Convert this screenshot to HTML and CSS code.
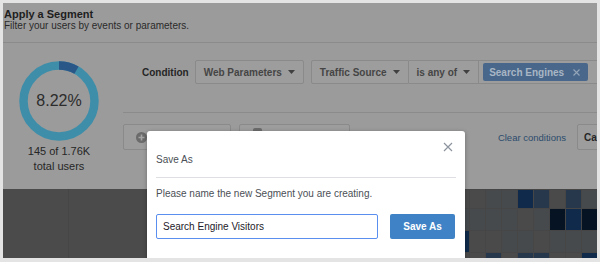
FILE: index.html
```html
<!DOCTYPE html>
<html lang="en">
<head>
<meta charset="utf-8">
<title>Apply a Segment</title>
<link rel="stylesheet" href="styles.css">
</head>
<body>
<div class="frame">
  <header class="head">
    <h1 class="title">Apply a Segment</h1>
    <p class="sub">Filter your users by events or parameters.</p>
  </header>
  <section class="main">
    <div class="stats">
      <div class="donut">
        <svg class="ring" viewBox="0 0 80 80" width="80" height="80">
          <circle cx="40" cy="40" r="35.5" fill="none" stroke="#3f8ea9" stroke-width="8.5"/>
          <circle cx="40" cy="40" r="35.5" fill="none" stroke="#295787" stroke-width="8.5" stroke-dasharray="18.3 300" transform="rotate(-90 40 40)"/>
        </svg>
        <span class="pct">8.22%</span>
      </div>
      <p class="count">145 of 1.76K<br>total users</p>
    </div>
    <div class="builder">
      <div class="cond">
        <span class="cond-label">Condition</span>
        <div class="dd single">Web Parameters <svg class="caret" width="7" height="4" viewBox="0 0 7 4"><path d="M0 0h7L3.5 4z"/></svg></div>
        <div class="group">
          <div class="dd first">Traffic Source <svg class="caret" width="7" height="4" viewBox="0 0 7 4"><path d="M0 0h7L3.5 4z"/></svg></div>
          <div class="dd mid">is any of <svg class="caret" width="7" height="4" viewBox="0 0 7 4"><path d="M0 0h7L3.5 4z"/></svg></div>
          <div class="tags">
            <span class="tag">Search Engines <svg class="tag-x" width="7" height="7" viewBox="0 0 7 7"><path d="M0.5 0.5l6 6M6.5 0.5l-6 6"/></svg></span>
          </div>
        </div>
      </div>
      <div class="actions">
        <div class="btn add">
          <svg width="11" height="11" viewBox="0 0 11 11"><circle cx="5.5" cy="5.5" r="5.5" fill="#6b6b6b"/><path d="M5.5 2.5v6M2.5 5.5h6" stroke="#a4a4a4" stroke-width="1.6"/></svg>
        </div>
        <div class="btn add2">
          <svg width="9" height="9" viewBox="0 0 9 9"><rect x="0" y="0" width="9" height="9" rx="2" fill="#6b6b6b"/></svg>
        </div>
        <span class="clear">Clear conditions</span>
        <div class="btn cancel">Cancel</div>
      </div>
    </div>
  </section>
  <section class="heat">
    <div class="heat-left"></div>
    <div class="grid">
      <i class="g"></i><i class="g"></i><i class="s"></i><i class="s"></i><i class="n"></i><i class="l"></i><i class="g"></i><i class="l"></i><i class="s"></i>
      <i class="s"></i><i class="s"></i><i class="s"></i><i class="s"></i><i class="g"></i><i class="s"></i><i class="d"></i><i class="n"></i><i class="d"></i>
      <i class="n"></i><i class="g"></i><i class="g"></i><i class="s"></i><i class="s"></i><i class="g"></i><i class="s"></i><i class="s"></i><i class="s"></i>
      <i class="g"></i><i class="g"></i><i class="l"></i><i class="g"></i><i class="l"></i><i class="l"></i><i class="g"></i><i class="g"></i><i class="n"></i>
    </div>
  </section>
  <div class="modal">
    <div class="m-head">Save As</div>
    <svg class="m-close" width="10" height="10" viewBox="0 0 10 10"><path d="M1 1l8 8M9 1l-8 8"/></svg>
    <div class="m-body">
      <p class="m-text">Please name the new Segment you are creating.</p>
      <div class="m-row">
        <input class="m-input" type="text" value="Search Engine Visitors">
        <button class="m-save" type="button">Save As</button>
      </div>
    </div>
  </div>
</div>
</body>
</html>
```
FILE: styles.css
```css
body {
  margin: 0;
  background: #e4e4e4;
  font-family: "Liberation Sans", Arial, sans-serif;
}

.frame {
  position: relative;
  margin: 3px;
  width: 594px;
  height: 255px;
  overflow: hidden;
  background: #9b9b9b;
}

.head {
  height: 40px;
  box-sizing: border-box;
  padding: 5px 1px 0;
  border-bottom: 1px solid #8b8b8b;
}

.title {
  margin: 0;
  font-size: 11px;
  line-height: 12px;
  font-weight: bold;
  color: #1e1e1e;
}

.sub {
  margin: 0;
  font-size: 10px;
  line-height: 12px;
  color: #2a2a2a;
}

.main {
  display: grid;
  grid-template-columns: 112px 1fr;
  height: 146px;
}

.stats {
  display: flex;
  flex-direction: column;
  align-items: center;
  padding-top: 18px;
}

.donut {
  display: grid;
  place-items: center;
  width: 80px;
  height: 80px;
}

.donut > * {
  grid-area: 1 / 1;
}

.pct {
  font-size: 16px;
  color: #2c2c2c;
}

.count {
  margin: 3px 0 0;
  font-size: 11px;
  line-height: 15px;
  text-align: center;
  color: #262626;
}

.builder {
  padding-left: 8px;
  min-width: 0;
}

.cond {
  display: flex;
  align-items: center;
  padding: 17px 0 28px 19px;
  border-bottom: 1px solid #8b8b8b;
}

.cond-label {
  font-size: 10px;
  font-weight: bold;
  color: #262626;
  margin-right: 6px;
}

.dd {
  display: flex;
  align-items: center;
  gap: 6px;
  height: 24px;
  box-sizing: border-box;
  padding: 0 8px;
  border: 1px solid #8a8a8a;
  background: #9d9d9d;
  font-size: 10px;
  font-weight: bold;
  color: #454545;
  border-radius: 2px;
  white-space: nowrap;
}

.caret {
  fill: #404040;
}

.group {
  display: flex;
  flex: 1;
  margin-left: 7px;
  min-width: 0;
}

.dd.first {
  border-radius: 2px 0 0 2px;
}

.dd.mid {
  border-left: none;
  border-radius: 0;
}

.tags {
  flex: 1;
  display: flex;
  align-items: center;
  height: 24px;
  box-sizing: border-box;
  border: 1px solid #8a8a8a;
  border-left: none;
  border-right: none;
  background: #9d9d9d;
}

.tag {
  display: flex;
  align-items: center;
  gap: 9px;
  height: 18px;
  margin-left: 4px;
  padding: 0 8px 0 6px;
  background: #48678a;
  color: #a9b6c5;
  font-size: 10px;
  font-weight: bold;
  border-radius: 2px;
  white-space: nowrap;
}

.tag-x {
  stroke: #95a6b9;
  stroke-width: 1.1;
}

.actions {
  display: flex;
  align-items: center;
  gap: 8px;
  margin-top: 11px;
  height: 26px;
}

.btn {
  display: flex;
  align-items: center;
  flex-shrink: 0;
  height: 26px;
  box-sizing: border-box;
  border: 1px solid #8a8a8a;
  background: #9d9d9d;
  border-radius: 2px;
}

.add {
  width: 108px;
  padding-left: 12px;
}

.add2 {
  width: 111px;
  padding-left: 13px;
  align-items: flex-start;
  padding-top: 3px;
}

.clear {
  margin-left: auto;
  font-size: 9.5px;
  color: #2b4b6d;
  white-space: nowrap;
}

.cancel {
  width: 60px;
  margin-left: 3px;
  margin-right: -40px;
  padding-left: 6px;
  font-size: 10px;
  font-weight: bold;
  color: #262626;
}

.heat {
  display: flex;
  justify-content: space-between;
  align-items: flex-start;
  height: 69px;
  background: #4b4b4b;
}

.heat-left {
  width: 65px;
  height: 100%;
  border-right: 1px solid #464646;
}

.grid {
  display: grid;
  grid-template-columns: repeat(9, 15px);
  grid-template-rows: 18px 21px 21px 21px;
  gap: 1px;
  padding-top: 1px;
  background: #464646;
}

.grid i {
  display: block;
}

.grid .g { background: #4a4a4a; }
.grid .s { background: #474a4d; }
.grid .n { background: #0f2a4a; }
.grid .l { background: #27384c; }
.grid .d { background: #061322; }

.modal {
  position: absolute;
  left: 144px;
  top: 128px;
  width: 318px;
  height: 150px;
  background: #fff;
  border-radius: 3px;
  box-shadow: 0 1px 4px rgba(0, 0, 0, 0.3);
  font-size: 10px;
  color: #4b4f56;
}

.m-head {
  margin: 0 9px;
  height: 47px;
  box-sizing: border-box;
  padding-top: 23px;
  line-height: 12px;
  border-bottom: 1px solid #dddfe2;
}

.m-close {
  position: absolute;
  top: 11px;
  right: 12px;
  stroke: #8d949e;
  stroke-width: 1.2;
}

.m-body {
  padding: 10px 10px 0 9px;
}

.m-text {
  margin: 0;
  line-height: 12px;
}

.m-row {
  display: flex;
  gap: 12px;
  margin-top: 14px;
}

.m-input {
  width: 222px;
  height: 25px;
  box-sizing: border-box;
  margin: 0;
  padding: 0 6px;
  border: 1px solid #5a8ff0;
  border-radius: 2px;
  font-family: "Liberation Sans", Arial, sans-serif;
  font-size: 10px;
  color: #1d2129;
  outline: none;
}

.m-save {
  width: 65px;
  height: 25px;
  margin: 0;
  padding: 0;
  border: none;
  border-radius: 2px;
  background: #3f83c6;
  color: #fff;
  font-family: "Liberation Sans", Arial, sans-serif;
  font-size: 10px;
  font-weight: bold;
}
```
